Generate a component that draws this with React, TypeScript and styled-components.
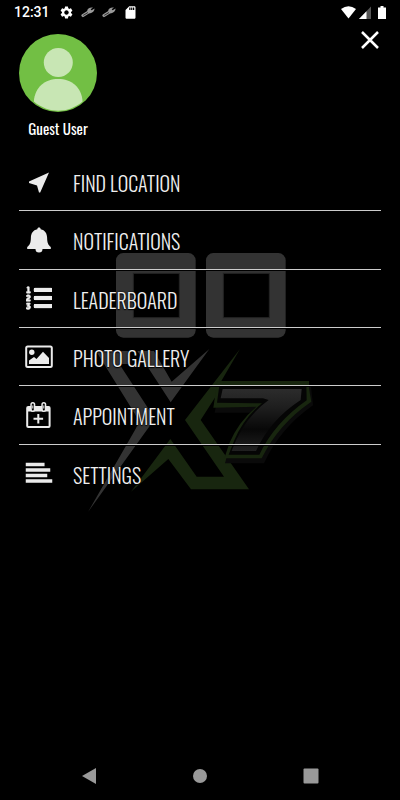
import React from 'react';
import styled, { createGlobalStyle } from 'styled-components';
import { MdSettings, MdSdCard } from 'react-icons/md';
import { FaListOl } from 'react-icons/fa';

const GlobalStyle = createGlobalStyle`
  * { box-sizing: border-box; }
  body { margin: 0; background: #000; color: #f0f0f0; font-family: 'Oswald', 'Roboto', sans-serif; }
  svg { display: block; flex: none; }
`;

const Screen = styled.div`
  display: flex;
  flex-direction: column;
  min-height: 100vh;
  background: #000;
`;

const StatusBar = styled.header`
  display: flex;
  align-items: center;
  justify-content: space-between;
  height: 24px;
  padding: 0 14px;
  color: #fff;
`;

const StatusGroup = styled.div<{ $gap: number }>`
  display: flex;
  align-items: center;
  gap: ${(p) => p.$gap}px;
`;

const Clock = styled.time`
  font: 500 14px/24px 'Roboto', sans-serif;
  margin-right: 2px;
`;

const Drawer = styled.main`
  position: relative;
  isolation: isolate;
  flex: 1;
`;

const Watermark = styled.svg`
  position: absolute;
  inset: 0;
  margin: auto;
  z-index: -1;
`;

const TopRow = styled.div`
  display: flex;
  align-items: flex-start;
  justify-content: space-between;
  padding: 0 14px 0 19px;
`;

const Profile = styled.section`
  display: flex;
  flex-direction: column;
  align-items: center;
  gap: 6px;
  padding-top: 10px;
`;

const UserName = styled.h1`
  margin: 0;
  color: #fff;
  font-size: 15px;
  font-weight: 400;
  line-height: 20px;
`;

const IconButton = styled.button`
  display: grid;
  place-items: center;
  min-width: 32px;
  height: 32px;
  padding: 0;
  border: 0;
  background: none;
  color: inherit;
  cursor: pointer;
`;

const Menu = styled.ul`
  display: grid;
  grid-auto-rows: 1fr;
  height: 350px;
  margin: 15px 19px 0;
  padding: 0;
  list-style: none;
`;

const MenuItem = styled.li`
  display: grid;
  &:not(:last-child) {
    border-bottom: 1px solid #ccc;
    box-shadow: 0 1px 0 #000;
  }
`;

const MenuLink = styled.a`
  display: flex;
  align-items: center;
  gap: 19px;
  padding: 3px 0 0 5px;
  color: #efefef;
  font-size: 20px;
  font-weight: 300;
  line-height: 30px;
  text-decoration: none;
  text-shadow: 0 0 2px #000, 0 1px 1px #000;
`;

const SystemNav = styled.nav`
  display: grid;
  grid-template-columns: repeat(3, 1fr);
  align-items: center;
  height: 48px;
  padding: 0 33px;
  color: #999;
`;

const Wrench = () => (
  <svg width="14" height="12" viewBox="0 0 14 12" aria-hidden="true">
    <path d="M2 9.500 7.500 6" stroke="#999" strokeWidth="3.200" strokeLinecap="round" />
    <path d="M2.200 9.400 7 6.500" stroke="#333" strokeWidth="1" />
    <path d="M13.600 2.500 10.600 4.200 9.700 3.200 12 1.600C8.600 1.200 6.300 2.600 6.200 4.800L8.600 7.400C11.700 7.100 13.500 5 13.600 2.500Z" fill="#999" />
  </svg>
);

const Avatar = () => (
  <svg width="78" height="78" viewBox="0 0 78 78" role="img" aria-label="Guest avatar">
    <circle cx="39" cy="39" r="39" fill="#72bf44" />
    <circle cx="39.3" cy="28.5" r="14.5" fill="#c8e6b4" />
    <path d="M14.8 67.5C16 53 26 45 39.2 45s23.3 8 24.4 22.5C49 79.800 29.500 79.800 14.800 67.500Z" fill="#c8e6b4" />
  </svg>
);

const Glyph = ({ children }: { children: React.ReactNode }) => (
  <svg width="30" height="30" viewBox="0 0 30 30" fill="#ebebeb" aria-hidden="true">
    {children}
  </svg>
);

const items = [
  {
    label: 'FIND LOCATION',
    icon: <path d="M25 4.500 5 13.500V15l8 2.500L15 24.500h1.200Z" />,
  },
  {
    label: 'NOTIFICATIONS',
    icon: (
      <>
        <path d="M15 1.500c1 0 1.600.7 1.700 1.700 4.300.9 6.300 4.200 6.400 8.300.1 5.200.9 7.300 3.700 9.500v2H3.200v-2c2.800-2.200 3.600-4.300 3.700-9.500.1-4.100 2.100-7.400 6.400-8.300.1-1 .7-1.700 1.700-1.700Z" />
        <path d="M11.500 23h7a3.500 3.500 0 0 1-7 0Z" />
      </>
    ),
  },
  {
    label: 'LEADERBOARD',
    icon: (
      <>
        <FaListOl x="2" y="0" size={26} stroke="#ebebeb" strokeWidth="12" />
        <path d="M10 3h18v4H10zM10 11h18v4H10zM10 19h18v4H10z" />
      </>
    ),
  },
  {
    label: 'PHOTO GALLERY',
    icon: (
      <>
        <rect x="2.200" y="3.500" width="25.600" height="20.600" rx="1.500" fill="none" stroke="#ebebeb" strokeWidth="2" />
        <circle cx="7.800" cy="9.200" r="2.700" />
        <path d="M5 21V17.500l5-3.500 2.500 2L19 8.700l6 6.300v6Z" />
      </>
    ),
  },
  {
    label: 'APPOINTMENT',
    icon: (
      <>
        <rect x="3.200" y="6" width="22.400" height="20" rx="1" fill="none" stroke="#ebebeb" strokeWidth="2" />
        <path d="M3 6h23v4.500H3z" />
        <path d="M8.800 3.500v5M19.800 3.500v5" stroke="#ebebeb" strokeWidth="5" strokeLinecap="round" />
        <path d="M8.800 3.500v5M19.800 3.500v5" stroke="#000" strokeWidth="2" strokeLinecap="round" />
        <path d="M8.800 4.500v3M19.800 4.500v3" stroke="#ebebeb" strokeWidth="1" />
        <path d="M14.300 13v9.600M9.500 17.800h9.600" stroke="#ebebeb" strokeWidth="2" />
      </>
    ),
  },
  {
    label: 'SETTINGS',
    icon: (
      <path d="M3.500 4.500h15.300M3.500 10h21M3.500 15.500h18M3.500 21h23" stroke="#ebebeb" strokeWidth="3.500" strokeLinecap="square" />
    ),
  },
];

const Logo = () => (
  <Watermark width="240" height="296" viewBox="0 0 720 888" aria-hidden="true">
    <defs>
      <linearGradient id="face" x1="0" y1="0" x2="0" y2="1">
        <stop offset="0" stopColor="#2c2c2c" />
        <stop offset=".3" stopColor="#1e1e1e" />
        <stop offset=".65" stopColor="#080808" />
        <stop offset="1" stopColor="#202020" />
      </linearGradient>
    </defs>
    <g fill="#333">
      <rect x="108" y="39" width="239" height="254" rx="22" />
      <rect x="378" y="39" width="239" height="254" rx="22" />
      <path d="M48 333H145V372H118L216 523Q222 536 215 550L24 816 168 565Q180 545 165 522Z" />
      <path d="M172 333H222L275 425 388 327 272 487Z" />
    </g>
    <g fill="#000" stroke="#242424" strokeWidth="3">
      <rect x="160" y="100" width="138" height="133" />
      <rect x="430" y="100" width="138" height="133" />
    </g>
    <path
      d="M480 327 315 540 432 710H350L271 597 153 755 265 657 333 748H507L362 540 410 465 424 423Z"
      fill="#18260f"
    />
    <path d="M418 438H693L699 496Q600 565 552 670H435L450 615Q478 550 525 518H404Z" fill="#0a0a0a" />
    <path d="M412 423H687V445L694 485Q595 552 545 655H433L448 610Q475 545 530 500L400 503Z" fill="#18260f" />
    <path d="M418 437H679L680 481Q584 548 538 644H446L462 603Q490 535 546 490L411 488Z" fill="#050505" />
    <path d="M428 447H665L662 480Q570 540 528 633H455Q490 535 566 480L549 475H422Z" fill="url(#face)" />
  </Watermark>
);

export default function App() {
  return (
    <Screen>
      <GlobalStyle />
      <StatusBar>
        <StatusGroup $gap={7}>
          <Clock>12:31</Clock>
          <MdSettings size={15} />
          <Wrench />
          <Wrench />
          <MdSdCard size={15} />
        </StatusGroup>
        <StatusGroup $gap={3}>
          <svg width="15" height="13" viewBox="0 0 15 13" aria-hidden="true">
            <path d="M0 3Q7.500-2.500 15 3L7.500 12.500Z" fill="#fff" />
          </svg>
          <svg width="16" height="13" viewBox="0 0 16 13" aria-hidden="true">
            <path d="M12 .5V13H0Z" fill="#555" />
            <path d="M7.500 5.200V13H0Z" fill="#fff" />
          </svg>
          <svg width="8" height="13" viewBox="0 0 8 13" aria-hidden="true">
            <path d="M2.500 0h3v1.500H8V13H0V1.500h2.500Z" fill="#fff" />
          </svg>
        </StatusGroup>
      </StatusBar>

      <Drawer>
        <Logo />
        <TopRow>
          <Profile>
            <Avatar />
            <UserName>Guest User</UserName>
          </Profile>
          <IconButton type="button" aria-label="Close menu">
            <svg width="18" height="18" viewBox="0 0 18 18" aria-hidden="true">
              <path d="M1 1 17 17M17 1 1 17" stroke="#fff" strokeWidth="2.500" />
            </svg>
          </IconButton>
        </TopRow>
        <Menu>
          {items.map((item) => (
            <MenuItem key={item.label}>
              <MenuLink href="#">
                <Glyph>{item.icon}</Glyph>
                {item.label}
              </MenuLink>
            </MenuItem>
          ))}
        </Menu>
      </Drawer>

      <SystemNav aria-label="System">
        <IconButton type="button" aria-label="Back">
          <svg width="16" height="16" viewBox="0 0 16 16" fill="currentColor"><path d="M15 0v16L1 8Z" /></svg>
        </IconButton>
        <IconButton type="button" aria-label="Home">
          <svg width="16" height="16" viewBox="0 0 16 16" fill="currentColor"><circle cx="8" cy="8" r="7" /></svg>
        </IconButton>
        <IconButton type="button" aria-label="Recent apps">
          <svg width="16" height="16" viewBox="0 0 16 16" fill="currentColor"><rect x=".5" y=".5" width="15" height="15" rx="1" /></svg>
        </IconButton>
      </SystemNav>
    </Screen>
  );
}
